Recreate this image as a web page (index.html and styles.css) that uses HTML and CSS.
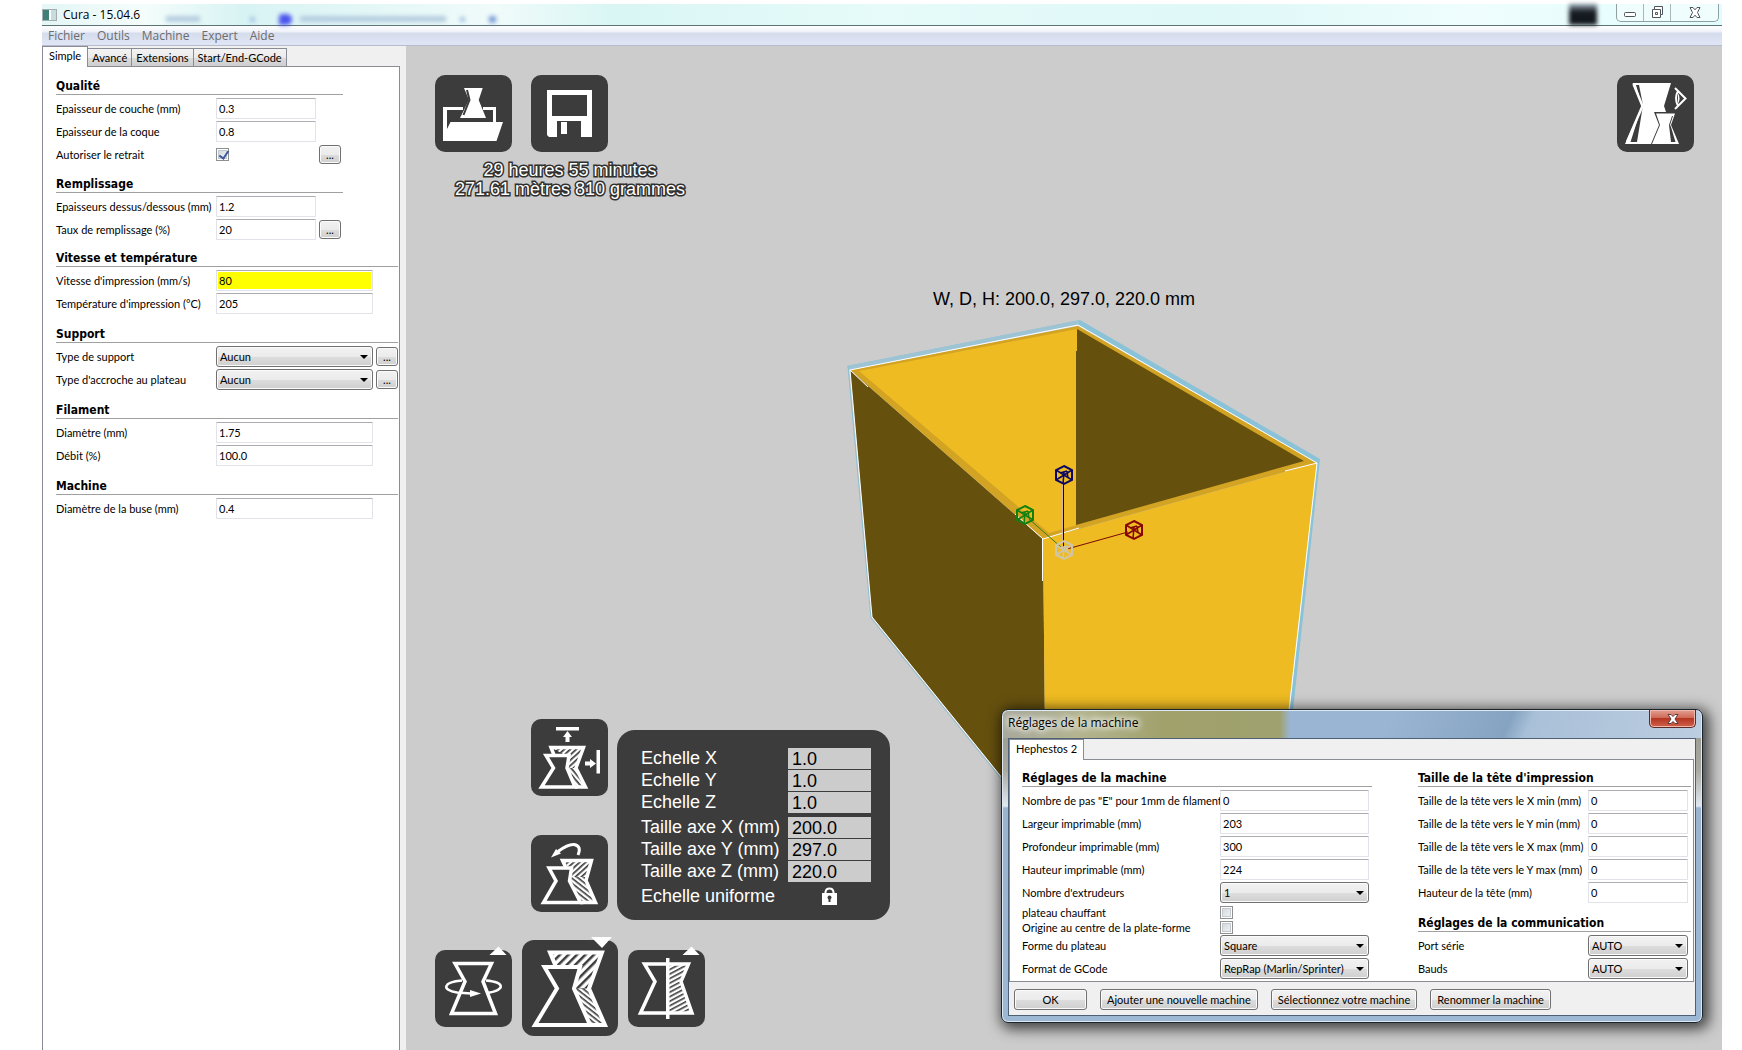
FILE: index.html
```html
<!DOCTYPE html>
<html lang="fr">
<head>
<meta charset="utf-8">
<title>Cura - 15.04.6</title>
<link rel="stylesheet" href="styles.css">
</head>
<body>
<div class="window">
  <header class="titlebar">
    <span class="app-icon"></span>
    <h1 class="app-title">Cura - 15.04.6</h1>
    <div class="glass" aria-hidden="true">
      <span class="glass-bar"></span><span class="glass-dot"></span><span class="glass-logo"></span><span class="glass-bar long"></span><span class="glass-dot"></span><span class="glass-dot strong"></span>
    </div>
    <span class="glass-blot"></span>
    <div class="window-controls">
      <button type="button" aria-label="Réduire"><svg width="14" height="12" viewBox="0 0 14 12"><rect x="1.500" y="5.500" width="11" height="4" rx="1" fill="#fff" stroke="#50545c"/></svg></button>
      <button type="button" aria-label="Agrandir"><svg width="13" height="13" viewBox="0 0 13 13"><path d="M3.500 .5h8v8h-2v3h-8v-8h2z" fill="#fff" stroke="#50545c"/><path d="M3.500 3.500h6v5M4.500 6.500h2v2h-2z" fill="none" stroke="#50545c"/></svg></button>
      <button type="button" class="wide" aria-label="Fermer"><svg width="12" height="11" viewBox="0 0 12 11"><path d="M1 .5h3l2 2.300 2-2.300h3l-2.500 5 2.500 5h-3l-2-2.300-2 2.300h-3l2.500-5z" fill="#fff" stroke="#50545c"/></svg></button>
    </div>
  </header>
  <nav class="menubar">
    <a href="#">Fichier</a><a href="#">Outils</a><a href="#">Machine</a><a href="#">Expert</a><a href="#">Aide</a>
  </nav>

  <div class="workspace">
    <aside class="sidebar">
      <div class="tabs">
        <button type="button" class="tab active">Simple</button><button type="button" class="tab">Avancé</button><button type="button" class="tab">Extensions</button><button type="button" class="tab">Start/End-GCode</button>
      </div>
      <form class="settings">
        <section class="group narrow">
          <h2>Qualité</h2>
          <div class="row"><label for="layer">Epaisseur de couche (mm)</label><input id="layer" type="text" value="0.3"></div>
          <div class="row"><label for="shell">Epaisseur de la coque</label><input id="shell" type="text" value="0.8"></div>
          <div class="row check-row"><label for="retract">Autoriser le retrait</label><input id="retract" type="checkbox" checked><button type="button" class="btn more">...</button></div>
        </section>
        <section class="group narrow">
          <h2>Remplissage</h2>
          <div class="row"><label for="topbottom">Epaisseurs dessus/dessous (mm)</label><input id="topbottom" type="text" value="1.2"></div>
          <div class="row"><label for="fill">Taux de remplissage (%)</label><input id="fill" type="text" value="20"><button type="button" class="btn more">...</button></div>
        </section>
        <section class="group">
          <h2>Vitesse et température</h2>
          <div class="row"><label for="speed">Vitesse d'impression (mm/s)</label><input id="speed" class="warn" type="text" value="80"></div>
          <div class="row"><label for="temp">Température d'impression (°C)</label><input id="temp" type="text" value="205"></div>
        </section>
        <section class="group">
          <h2>Support</h2>
          <div class="row"><label for="support">Type de support</label><span class="select"><select id="support"><option>Aucun</option></select></span><button type="button" class="btn more">...</button></div>
          <div class="row"><label for="adhesion">Type d'accroche au plateau</label><span class="select"><select id="adhesion"><option>Aucun</option></select></span><button type="button" class="btn more">...</button></div>
        </section>
        <section class="group">
          <h2>Filament</h2>
          <div class="row"><label for="diameter">Diamètre (mm)</label><input id="diameter" type="text" value="1.75"></div>
          <div class="row"><label for="flow">Débit (%)</label><input id="flow" type="text" value="100.0"></div>
        </section>
        <section class="group">
          <h2>Machine</h2>
          <div class="row"><label for="nozzle">Diamètre de la buse (mm)</label><input id="nozzle" type="text" value="0.4"></div>
        </section>
      </form>
    </aside>

    <main class="viewport">
      <svg class="scene" viewBox="406 46 1316 1004" role="img" aria-label="Modèle 3D">
        <text class="dims" x="1064" y="305" text-anchor="middle">W, D, H: 200.0, 297.0, 220.0 mm</text>
        <path d="M847 366L1080 320L1320 459L1317 463L1078 325L850 370Z" fill="#8ac2d8"/>
        <path d="M847 366L1080 320L1078 325L850 370Z" fill="#9cc4d4"/>
        <path d="M1320 459L1292 720H1288L1317 462Z" fill="#8ac2d8"/>
        <path d="M848 366L871 618L1020 802" fill="none" stroke="#8abfd2"/>
        <path d="M850 370L1043 539L1046 832L872 617Z" fill="#65500e"/>
        <path d="M1043 539L1317 463L1278 800L1046 832Z" fill="#eebb22"/>
        <path d="M850 370L1078 326L1317 463L1043 539Z" fill="#d3a323"/>
        <path d="M859 371L1077 329V525L1049 533Z" fill="#eebb22"/>
        <path d="M1077 329L1304 461L1076 525V351H1077Z" fill="#65500e"/>
        <g fill="none" stroke="#fff">
          <path d="M868 387L850 370L1078 325L1317 463L1288 720M850 370L872 617L1020 800"/>
          <path d="M1015 514L1043 539M1043 539L1079 528M1285 471L1317 463"/>
          <path d="M1042.500 539V581"/>
        </g>
        <path d="M1029 519L1062 548" stroke="#3a7a10"/>
        <path d="M1067 549L1128 532" stroke="#7a0808"/>
        <path d="M1062.500 485V540" stroke="#d9b3a0"/>
        <path d="M1063.500 484V549" stroke="#0a0836"/>
        <defs>
          <g id="handle" fill="none" stroke-width="2">
            <path d="M0 -9L8 -5V5L0 9L-8 5V-5Z"/>
            <path d="M-8 -5L8 5M8 -5L-8 5M0 -3L-1 9M-4 -2L3 -4M3 -4L4 3" stroke-width="1.500"/>
          </g>
        </defs>
        <use href="#handle" x="1064" y="475" stroke="#0a0766"/>
        <use href="#handle" x="1025" y="515" stroke="#108010"/>
        <use href="#handle" x="1134" y="530" stroke="#860606"/>
        <use href="#handle" x="1064" y="550" stroke="#cfc6ae"/>
      </svg>

      <div class="file-tools">
        <div class="tool-row">
          <button type="button" class="tool" aria-label="Charger"><svg viewBox="0 0 77 77"><path d="M8 32H28V35H12V54L15.500 47H68L61.500 66H8ZM48 32H61V47H58V35H48Z" fill="#fff"/><path d="M29 13H47.700L43.700 25L51 43H25L34 25Z" fill="#fff"/><path d="M32 15L34.500 25L28.500 40" fill="none" stroke="#3c3c3c" stroke-width="2"/></svg></button>
          <button type="button" class="tool" aria-label="Enregistrer"><svg viewBox="0 0 77 77"><path fill-rule="evenodd" d="M16 15H61V62H50V46H26V62H18L16 60ZM21 20V41H56V20Z" fill="#fff"/><path d="M30 47H36V59H30Z" fill="#fff"/></svg></button>
        </div>
        <p class="estimate">29 heures 55 minutes<br>271.61 mètres 810 grammes</p>
      </div>

      <button type="button" class="tool view-mode" aria-label="Mode de vue"><svg viewBox="0 0 77 77"><path d="M15.500 8H54L47 31L49 37H37L42 50L34 69H8L25 31Z" fill="#fff"/><path d="M19 10H22L26 30L20 67H13.500L24 34L25 31Z" fill="#3c3c3c"/><path d="M16.500 9L25.500 31L10 67" fill="none" stroke="#fff" stroke-width="2.500"/><path d="M39 38.500H58L54 50L62 69H35L43 50Z" fill="#fff"/><path d="M55 41L52 50L54 67H58.500L54 52L53 50L56 41Z" fill="#3c3c3c"/><path d="M58 13L68.500 23.500L58 34M61 16Q57 23 61 31" fill="none" stroke="#fff" stroke-width="2"/><path d="M61 18Q64 23.500 61 29Z" fill="#fff"/></svg></button>

      <div class="scale-tools">
        <div class="tool-column">
          <button type="button" class="tool" aria-label="Echelle maximale"><svg viewBox="0 0 77 77">
            <defs><pattern id="hatch" width="4" height="4" patternUnits="userSpaceOnUse" patternTransform="rotate(-42)"><rect width="4" height="4" fill="#fff"/><rect width="4" height="1.700" fill="#3c3c3c"/></pattern>
            <pattern id="hatch-down" width="4" height="4" patternUnits="userSpaceOnUse" patternTransform="rotate(50)"><rect width="4" height="4" fill="#fff"/><rect width="4" height="1.700" fill="#3c3c3c"/></pattern>
            <pattern id="hatch-large" width="6" height="6" patternUnits="userSpaceOnUse" patternTransform="rotate(-45)"><rect width="6" height="6" fill="#fff"/><rect width="6" height="2.500" fill="#3c3c3c"/></pattern>
            <pattern id="hatch-flat" width="4" height="4" patternUnits="userSpaceOnUse" patternTransform="rotate(-28)"><rect width="4" height="4" fill="#fff"/><rect width="4" height="1.600" fill="#3c3c3c"/></pattern>
            <pattern id="hatch-mid" width="4" height="4" patternUnits="userSpaceOnUse" patternTransform="rotate(38)"><rect width="4" height="4" fill="#fff"/><rect width="4" height="1.600" fill="#3c3c3c"/></pattern></defs>
            <path d="M20 28.500H52.500L45 49H34V36Z" fill="url(#hatch)"/><path d="M34 49H45L54.500 68H42Z" fill="url(#hatch-down)"/><path d="M23 36L20 28.500H52.500L45 49L54.500 68H44" fill="none" stroke="#fff" stroke-width="3.500"/><path d="M15 36.500H38L36 49L44 68H10.500L22.500 49Z" fill="#3c3c3c" stroke="#fff" stroke-width="3.500"/><path d="M25 8H48V11.500H25ZM36.500 12L41 18H38.500V23H34.500V18H32ZM65.500 31H69V54.500H65.500ZM54 42.500H59V40L65 44.500L59 49V46.500H54Z" fill="#fff"/></svg></button>
          <button type="button" class="tool" aria-label="Réinitialiser"><svg viewBox="0 0 77 77"><path d="M31.500 25.500H60.500L55 42H38V33Z" fill="url(#hatch)"/><path d="M38 42H55V46L64.500 67.500H50L38 46Z" fill="url(#hatch-mid)"/><path d="M35 33L31.500 25.500H60.500L55 45.500L64.500 67.500H49" fill="none" stroke="#fff" stroke-width="3.500"/><path d="M18 33H40.500L38.500 46L49.500 67.500H12.500L25 46Z" fill="#3c3c3c" stroke="#fff" stroke-width="3.500"/><path d="M47 20Q51 11 43 9.500Q37 9 27 16.500" fill="none" stroke="#fff" stroke-width="3"/><path d="M20 22.500L25 14L30 18.500Z" fill="#fff"/></svg></button>
        </div>
        <form class="scale-panel">
          <div class="scale-row"><label for="sx">Echelle X</label><input id="sx" type="text" value="1.0"></div>
          <div class="scale-row"><label for="sy">Echelle Y</label><input id="sy" type="text" value="1.0"></div>
          <div class="scale-row"><label for="sz">Echelle Z</label><input id="sz" type="text" value="1.0"></div>
          <div class="scale-row spaced"><label for="tx">Taille axe X (mm)</label><input id="tx" type="text" value="200.0"></div>
          <div class="scale-row"><label for="ty">Taille axe Y (mm)</label><input id="ty" type="text" value="297.0"></div>
          <div class="scale-row"><label for="tz">Taille axe Z (mm)</label><input id="tz" type="text" value="220.0"></div>
          <div class="scale-row spaced"><span>Echelle uniforme</span><button type="button" class="lock" aria-label="Echelle uniforme"><svg width="15" height="19" viewBox="0 0 15 19"><path d="M3.500 7V5Q4 1.500 7.500 1.500T11.500 5V7" fill="none" stroke="#fff" stroke-width="2"/><path d="M0 6H15V18H0Z" fill="#fff"/><circle cx="7.500" cy="10.500" r="2" fill="#3c3c3c"/><path d="M6.500 11H8.500V15H6.500Z" fill="#3c3c3c"/></svg></button></div>
        </form>
      </div>

      <div class="model-tools">
        <button type="button" class="tool" aria-label="Rotation"><svg viewBox="0 0 77 77"><path d="M20 13.500H56.500L48 31.500L60.500 63.500H16.500L30 31.500Z" fill="none" stroke="#fff" stroke-width="3.500"/><path d="M27 30.500C8 32 6 40 22 42.500L36 43.500M51 30.500C70 32 71 40 52 43" fill="none" stroke="#fff" stroke-width="2.500"/><path d="M35 40L46 43.500L35 47Z" fill="#fff"/><path d="M54.500 5H71.500L63.500 -3.500Z" fill="#fff"/></svg></button>
        <button type="button" class="tool large" aria-label="Echelle"><svg viewBox="0 0 96 96"><path d="M28 12.500H80L67 48.500H50V27H34Z" fill="url(#hatch-large)"/><path d="M50 48.500H67L83 85H66Z" fill="url(#hatch-mid)"/><path d="M34 27L28 12.500H80L67 48.500L83 85H66" fill="none" stroke="#fff" stroke-width="4"/><path d="M22.500 27H58L52 48.500L68 85H13L35 48.500Z" fill="#3c3c3c" stroke="#fff" stroke-width="4"/><path d="M69 -3H90L80 8Z" fill="#fff"/></svg></button>
        <button type="button" class="tool" aria-label="Miroir"><svg viewBox="0 0 77 77"><path d="M40 14H60.500L53 31.500L63.500 63H40Z" fill="url(#hatch-flat)"/><path d="M16.500 14H60.500L53 31.500L64 63H12.500L27 31.500Z" fill="none" stroke="#fff" stroke-width="3.500"/><path d="M38 8H41.500V69H38Z" fill="#fff"/><path d="M54.500 5H71.500L63.500 -3.500Z" fill="#fff"/></svg></button>
      </div>
    </main>
  </div>
</div>

<div class="dialog" role="dialog" aria-labelledby="dialog-title">
  <div class="dialog-bar">
    <h2 id="dialog-title">Réglages de la machine</h2>
    <button type="button" class="dialog-close" aria-label="Fermer"><svg width="12" height="10" viewBox="0 0 12 10"><path d="M1 .5h3l2 2 2-2h3l-3 4.500 3 4.500h-3l-2-2-2 2h-3l3-4.500z" fill="#fff" stroke="#5a3a3a"/></svg></button>
  </div>
  <form class="dialog-body">
    <div class="tabs"><button type="button" class="tab active">Hephestos 2</button></div>
    <div class="dialog-page">
      <section class="group machine">
        <h2>Réglages de la machine</h2>
        <div class="row"><label for="esteps">Nombre de pas "E" pour 1mm de filament</label><input id="esteps" type="text" value="0"></div>
        <div class="row"><label for="mw">Largeur imprimable (mm)</label><input id="mw" type="text" value="203"></div>
        <div class="row"><label for="md">Profondeur imprimable (mm)</label><input id="md" type="text" value="300"></div>
        <div class="row"><label for="mh">Hauteur imprimable (mm)</label><input id="mh" type="text" value="224"></div>
        <div class="row"><label for="ext">Nombre d'extrudeurs</label><span class="select"><select id="ext"><option>1</option></select></span></div>
        <div class="row short"><label for="bed">plateau chauffant</label><input id="bed" type="checkbox"></div>
        <div class="row short"><label for="origin">Origine au centre de la plate-forme</label><input id="origin" type="checkbox"></div>
        <div class="row"><label for="shape">Forme du plateau</label><span class="select"><select id="shape"><option>Square</option></select></span></div>
        <div class="row"><label for="gcode">Format de GCode</label><span class="select"><select id="gcode"><option>RepRap (Marlin/Sprinter)</option></select></span></div>
      </section>
      <div class="head-column">
        <section class="group head">
          <h2>Taille de la tête d'impression</h2>
          <div class="row"><label for="hx1">Taille de la tête vers le X min (mm)</label><input id="hx1" type="text" value="0"></div>
          <div class="row"><label for="hy1">Taille de la tête vers le Y min (mm)</label><input id="hy1" type="text" value="0"></div>
          <div class="row"><label for="hx2">Taille de la tête vers le X max (mm)</label><input id="hx2" type="text" value="0"></div>
          <div class="row"><label for="hy2">Taille de la tête vers le Y max (mm)</label><input id="hy2" type="text" value="0"></div>
          <div class="row"><label for="hh">Hauteur de la tête (mm)</label><input id="hh" type="text" value="0"></div>
        </section>
        <section class="group head">
          <h2>Réglages de la communication</h2>
          <div class="row"><label for="port">Port série</label><span class="select"><select id="port"><option>AUTO</option></select></span></div>
          <div class="row"><label for="baud">Bauds</label><span class="select"><select id="baud"><option>AUTO</option></select></span></div>
        </section>
      </div>
    </div>
    <div class="dialog-actions">
      <button type="button" class="btn ok">OK</button>
      <button type="button" class="btn">Ajouter une nouvelle machine</button>
      <button type="button" class="btn">Sélectionnez votre machine</button>
      <button type="button" class="btn">Renommer la machine</button>
    </div>
  </form>
</div>
</body>
</html>
```
FILE: styles.css
```css
* { box-sizing: border-box; }

body {
  margin: 0;
  padding: 4px 20px 0 42px;
  min-height: 100vh;
  display: flex;
  position: relative;
  overflow: hidden;
  background: #fff;
  color: #000;
  font: 11px/15px Lato, "Noto Sans", sans-serif;
}

h1, h2, p { margin: 0; }
button, input, select { font: inherit; color: inherit; margin: 0; padding: 0; }
svg { display: block; overflow: visible; }

.window { flex: 1; display: flex; flex-direction: column; }

/* title bar */
.titlebar {
  height: 22px;
  display: flex;
  align-items: center;
  border-bottom: 1px solid #5d7274;
  background: linear-gradient(90deg, #e4f6f6, #f4fdfb 6%, #d8f3f4 12%, #f0fbfa 27%, #d9f6f4 34%, #e6fbfa 50%, #dff8f8 70%, #effdfd 85%, #e2fdfd);
}
.app-icon {
  width: 15px;
  height: 12px;
  border: 1px solid #a3adb0;
  background: linear-gradient(90deg, #3f7f78 6px, #fff 6px, #fff 8px, #c9dcdc 8px);
}
.app-title { margin-left: 6px; font: 12px/16px "Open Sans", "Noto Sans", sans-serif; }
.glass {
  flex: 1;
  align-self: flex-end;
  height: 12px;
  margin-left: 26px;
  display: flex;
  align-items: center;
  filter: blur(2px);
}
.glass-bar { width: 34px; height: 6px; margin-right: 50px; background: #b4cddf; }
.glass-bar.long { width: 146px; margin-right: 14px; }
.glass-dot { width: 5px; height: 5px; margin-right: 24px; background: #a4c3e0; }
.glass-dot.strong { width: 7px; height: 7px; background: #7f9fd8; }
.glass-logo { width: 13px; height: 11px; margin-right: 8px; border-radius: 4px 6px 6px 0; background: #4a55ee; }
.glass-blot { width: 28px; height: 21px; margin-right: 19px; background: linear-gradient(#9aa6b4, #14181f 40%); filter: blur(2px); }
.window-controls {
  display: flex;
  align-self: flex-start;
  height: 18px;
  margin-right: 3px;
  border: 1px solid #8f9fa3;
  border-top: 0;
  border-radius: 0 0 5px 5px;
  background: #effdfd;
}
.window-controls button {
  width: 27px;
  display: grid;
  place-items: center;
  border: 0;
  border-right: 1px solid #a9b7ba;
  background: none;
}
.window-controls button.wide { width: 47px; border-right: 0; }

/* menu bar */
.menubar {
  height: 20px;
  display: flex;
  gap: 12px;
  padding: 2px 6px;
  border-bottom: 1px solid #b6bccc;
  background: linear-gradient(#fff, #eef1f8 6px, #d5dcec 7px, #e0e6f5);
  font: 12px/16px "Open Sans", "Noto Sans", sans-serif;
}
.menubar a { color: #6d6d6d; text-decoration: none; }

.workspace { flex: 1; display: flex; background: #f0f0f0; }
.sidebar { width: 364px; display: flex; flex-direction: column; }

/* tabs */
.tabs { height: 20px; display: flex; align-items: flex-end; }
.tab {
  height: 18px;
  padding: 0 4px;
  border: 1px solid #898c95;
  border-bottom: 0;
  border-left-width: 0;
  background: linear-gradient(#f3f3f3, #ebebeb 50%, #dcdcdc 51%, #cecece);
}
.tab.active {
  height: 21px;
  margin-bottom: -1px;
  padding: 0 6px 3px;
  border-left-width: 1px;
  position: relative;
  background: #fff;
}

/* settings forms */
.settings {
  flex: 1;
  width: 358px;
  padding: 1px 1px 0 13px;
  border: 1px solid #898c95;
  border-bottom: 0;
  background: #fff;
}
.group { width: 342px; padding-bottom: 2px; display: grid; row-gap: 2px; }
.group.narrow { width: 287px; padding-bottom: 0; }
.group h2 {
  height: 27px;
  margin-bottom: 1px;
  padding-top: 10px;
  border-bottom: 1px solid #a0a0a0;
  font: bold 12px/16px "DejaVu Sans Condensed", "Noto Sans", sans-serif;
}
.row {
  height: 21px;
  display: grid;
  grid-template-columns: 160px 160px 22px;
  align-items: center;
}
.row label { white-space: nowrap; }
.row > input[type="text"], .row > .select { margin-right: 3px; }
.narrow .row { grid-template-columns: 160px 103px 22px; }
.check-row { height: 20px; margin-bottom: 2px; }

input[type="text"] {
  min-width: 0;
  height: 21px;
  padding: 0 2px 1px;
  border: 1px solid #e2e3ea;
  border-top-color: #abadb3;
  border-radius: 1px;
  background: #fff;
}
input[type="text"].warn { background: #ff0; box-shadow: inset 0 0 0 1px #fff; }

input[type="checkbox"] {
  appearance: none;
  width: 13px;
  height: 13px;
  border: 1px solid #8e8f8f;
  background: linear-gradient(135deg, #cfd3d8, #f6f6f6);
  box-shadow: inset 0 0 0 1px #fff, inset 0 0 0 2px #c4c9cf;
}
input[type="checkbox"]:checked::after {
  content: "";
  display: block;
  width: 4px;
  height: 8px;
  margin-left: 4px;
  border: solid #3f5a9c;
  border-width: 0 2px 2px 0;
  transform: rotate(35deg);
}

.select { display: grid; position: relative; }
select {
  appearance: none;
  width: 100%;
  height: 21px;
  padding: 0 16px 0 3px;
  border: 1px solid #707070;
  border-radius: 3px;
  background: linear-gradient(#f2f2f2, #ebebeb 50%, #dddddd 51%, #cfcfcf);
  box-shadow: inset 0 0 0 1px #fbfbfb;
}
.select::after {
  content: "";
  position: absolute;
  right: 5px;
  top: 9px;
  border: 4px solid transparent;
  border-top-color: #000;
  border-bottom: 0;
}

.btn {
  height: 21px;
  padding: 0 6px;
  border: 1px solid #707070;
  border-radius: 3px;
  background: linear-gradient(#f2f2f2, #ebebeb 50%, #dddddd 51%, #cfcfcf);
  box-shadow: inset 0 0 0 1px #fbfbfb;
  white-space: nowrap;
}
.btn.more { width: 22px; height: 19px; padding: 0; }

/* 3D view */
.viewport { flex: 1; position: relative; background: #ccc; font: 18px/22px "Liberation Sans", Arial, sans-serif; }
.scene { position: absolute; inset: 0; width: 100%; height: 100%; }
.dims { font-size: 18px; }

.tool {
  width: 77px;
  height: 77px;
  border: 0;
  border-radius: 10px;
  background: #3c3c3c;
}
.tool.large { width: 96px; height: 96px; border-radius: 12px; }
.tool svg { width: 100%; height: 100%; }

.file-tools { position: absolute; left: 29px; top: 29px; }
.tool-row { display: flex; gap: 19px; }
.estimate {
  width: max-content;
  margin: 9px 0 0 20px;
  text-align: center;
  line-height: 19px;
  color: #fff;
  -webkit-text-stroke: 3px #303030;
  paint-order: stroke fill;
}
.view-mode { position: absolute; right: 28px; top: 29px; }

.scale-tools { position: absolute; left: 125px; bottom: 130px; display: flex; gap: 9px; }
.tool-column { display: flex; flex-direction: column; gap: 39px; }
.scale-panel {
  width: 273px;
  height: 190px;
  margin-top: 11px;
  padding: 17px 19px 0 24px;
  border-radius: 18px;
  background: #3c3c3c;
  color: #fff;
}
.scale-row { height: 22px; display: grid; grid-template-columns: 147px 83px; align-items: center; }
.scale-row.spaced { margin-top: 3px; }
.scale-row input[type="text"] {
  height: 21px;
  padding: 1px 4px 0;
  border: 0;
  border-radius: 0;
  background: #ccc;
  color: #000;
}
.lock { justify-self: center; border: 0; background: none; }

.model-tools { position: absolute; left: 29px; bottom: 14px; display: flex; align-items: center; gap: 10px; }

/* machine settings dialog */
.dialog {
  position: absolute;
  right: 39px;
  bottom: 27px;
  width: 702px;
  padding: 0 6px 6px;
  border: 1px solid #1c242c;
  border-radius: 7px;
  background:
    linear-gradient(90deg, #a8a89c, #b4b58f 80px, #a0a16b 160px, #9fa16f 278px, transparent 288px) 0 0 / 100% 28px no-repeat,
    linear-gradient(115deg, #9ab5d3 55%, #86a4c2 72%, #a9c0d8 75%, #bccde0) 0 0 / 100% 28px no-repeat,
    linear-gradient(#93958a 0, #a9a9a0 60px, #e0e8f0 96px, #9ab4d0 98px, #9db8d4);
  box-shadow: inset 0 0 0 1px #dfe9f3, 3px 3px 14px 3px #000000b0;
}
.dialog-bar { height: 28px; display: flex; justify-content: space-between; }
.dialog-bar h2 {
  font: 12px/26px "Open Sans", "Noto Sans", sans-serif;
  text-shadow: 0 0 6px #fff, 0 0 8px #fff, 0 0 10px #fff;
}
.dialog-close {
  width: 47px;
  height: 18px;
  display: grid;
  place-items: center;
  border: 1px solid #5d2a28;
  border-top: 0;
  border-radius: 0 0 5px 5px;
  background: linear-gradient(#e3a093, #cf6a58 45%, #b53622 50%, #d0614a);
  box-shadow: inset 0 0 0 1px #f0b8ac;
}
.dialog-body { border: 1px solid #4d6076; background: #f0f0f0; }
.dialog-page {
  display: flex;
  justify-content: space-between;
  margin-right: 1px;
  padding: 0 2px 0 12px;
  border: 1px solid #898c95;
  background: #fff;
}
.group.machine { width: 350px; }
.group.head { width: 273px; }
.machine .row { grid-template-columns: 198px 152px; }
.machine .row.short { height: 13px; }
.head .row { grid-template-columns: 170px 103px; }
.dialog-actions { display: flex; gap: 13px; padding: 7px 5px 5px; }
.btn.ok { width: 73px; }
```
